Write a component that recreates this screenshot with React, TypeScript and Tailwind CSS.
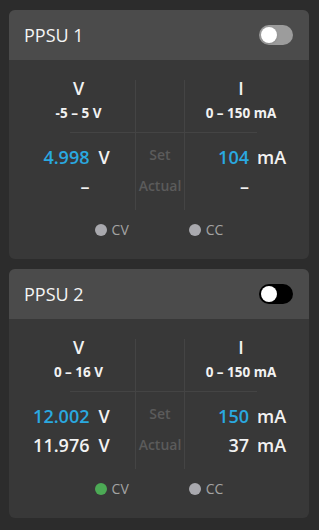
const font = { fontFamily: '"Open Sans", "Noto Sans", sans-serif' }

type Psu = {
  name: string
  enabled: boolean
  vRange: string
  iRange: string
  vSet: string
  iSet: string
  vActual: string | null
  iActual: string | null
  cv: boolean
  cc: boolean
}

const PSUS: Psu[] = [
  { name: 'PPSU 1', enabled: false, vRange: '-5 – 5 V', iRange: '0 – 150 mA', vSet: '4.998', iSet: '104', vActual: null, iActual: null, cv: false, cc: false },
  { name: 'PPSU 2', enabled: true, vRange: '0 – 16 V', iRange: '0 – 150 mA', vSet: '12.002', iSet: '150', vActual: '11.976', iActual: '37', cv: true, cc: false },
]

function Toggle({ enabled }: { enabled: boolean }) {
  return (
    <div className={`w-[34px] h-[20px] rounded-full p-[2px] flex items-center ${enabled ? 'bg-black' : 'bg-[#9c9c9c]'}`}>
      <div className="w-[16px] h-[16px] rounded-full bg-white shadow-sm" />
    </div>
  )
}

function Value({ num, unit, blue, side }: { num: string | null; unit: string; blue?: boolean; side: 'l' | 'r' }) {
  return (
    <div className="flex justify-center text-[18px] leading-[24px] font-semibold">
      <span className={`${side === 'l' ? 'w-[59px]' : 'w-[52px]'} text-right ${blue ? 'text-[#2aa9e0]' : 'text-[#f2f2f2]'}`}>
        {num ?? '–'}
      </span>
      <span className={`w-[28px] ${side === 'l' ? 'ml-[9px]' : 'ml-[8px]'} text-left text-[#f2f2f2]`}>{num ? unit : ''}</span>
    </div>
  )
}

function Indicator({ label, on }: { label: string; on: boolean }) {
  return (
    <div className="flex items-center gap-[5px]">
      <span className={`w-[12px] h-[12px] rounded-full ${on ? 'bg-[#4caa55]' : 'bg-[#a9a9ae]'}`} />
      <span className="text-[14px] leading-[20px] text-[#a3a3a3]">{label}</span>
    </div>
  )
}

function PsuCard({ psu }: { psu: Psu }) {
  const mid = 'border-x border-[#444444]'
  return (
    <div className="rounded-md overflow-hidden bg-[#383838]">
      <div className="h-[50px] bg-[#4b4b4b] pl-[15px] pr-4 flex items-center justify-between">
        <span className="text-[18px] font-medium text-[#f4f4f4]">{psu.name}</span>
        <Toggle enabled={psu.enabled} />
      </div>
      <div className="pl-[13px] pr-[12px] pt-5">
        <div className="grid grid-cols-[113px_50px_112px] text-center">
          <div className="text-[18px] leading-[16px] font-semibold text-[#f2f2f2]">V</div>
          <div className={mid} />
          <div className="text-[18px] leading-[16px] font-semibold text-[#f2f2f2]">I</div>

          <div className="pt-[7px] pb-[9px] text-[13.5px] leading-[20px] font-bold text-[#f2f2f2]">{psu.vRange}</div>
          <div className={mid} />
          <div className="pt-[7px] pb-[9px] text-[13.5px] leading-[20px] font-bold text-[#f2f2f2]">{psu.iRange}</div>

          <div className="h-px ml-[48px] bg-[#444444]" />
          <div className="h-px bg-[#444444]" />
          <div className="h-px mr-[40px] bg-[#444444]" />

          <div className="pt-[12px]">
            <Value num={psu.vSet} unit="V" blue side="l" />
          </div>
          <div className={`${mid} pt-[12px] text-[14px] leading-[20px] font-semibold text-[#5b5b5b]`}>Set</div>
          <div className="pt-[12px]">
            <Value num={psu.iSet} unit="mA" blue side="r" />
          </div>

          <div className="pt-[5px] pb-[12px]">
            <Value num={psu.vActual} unit="V" side="l" />
          </div>
          <div className={`${mid} pt-[7px] text-[14px] leading-[20px] font-semibold text-[#5b5b5b]`}>Actual</div>
          <div className="pt-[5px] pb-[12px]">
            <Value num={psu.iActual} unit="mA" side="r" />
          </div>
        </div>
      </div>
      <div className="flex justify-center gap-[60px] pt-[10px] pb-[19px]">
        <Indicator label="CV" on={psu.cv} />
        <Indicator label="CC" on={psu.cc} />
      </div>
    </div>
  )
}

export default function App() {
  return (
    <div className="w-[319px] h-[530px] bg-[#2c2c2c] pt-[10px] pl-[9px] pr-[10px] flex flex-col gap-[10px]" style={font}>
      {PSUS.map((p) => (
        <PsuCard key={p.name} psu={p} />
      ))}
    </div>
  )
}
